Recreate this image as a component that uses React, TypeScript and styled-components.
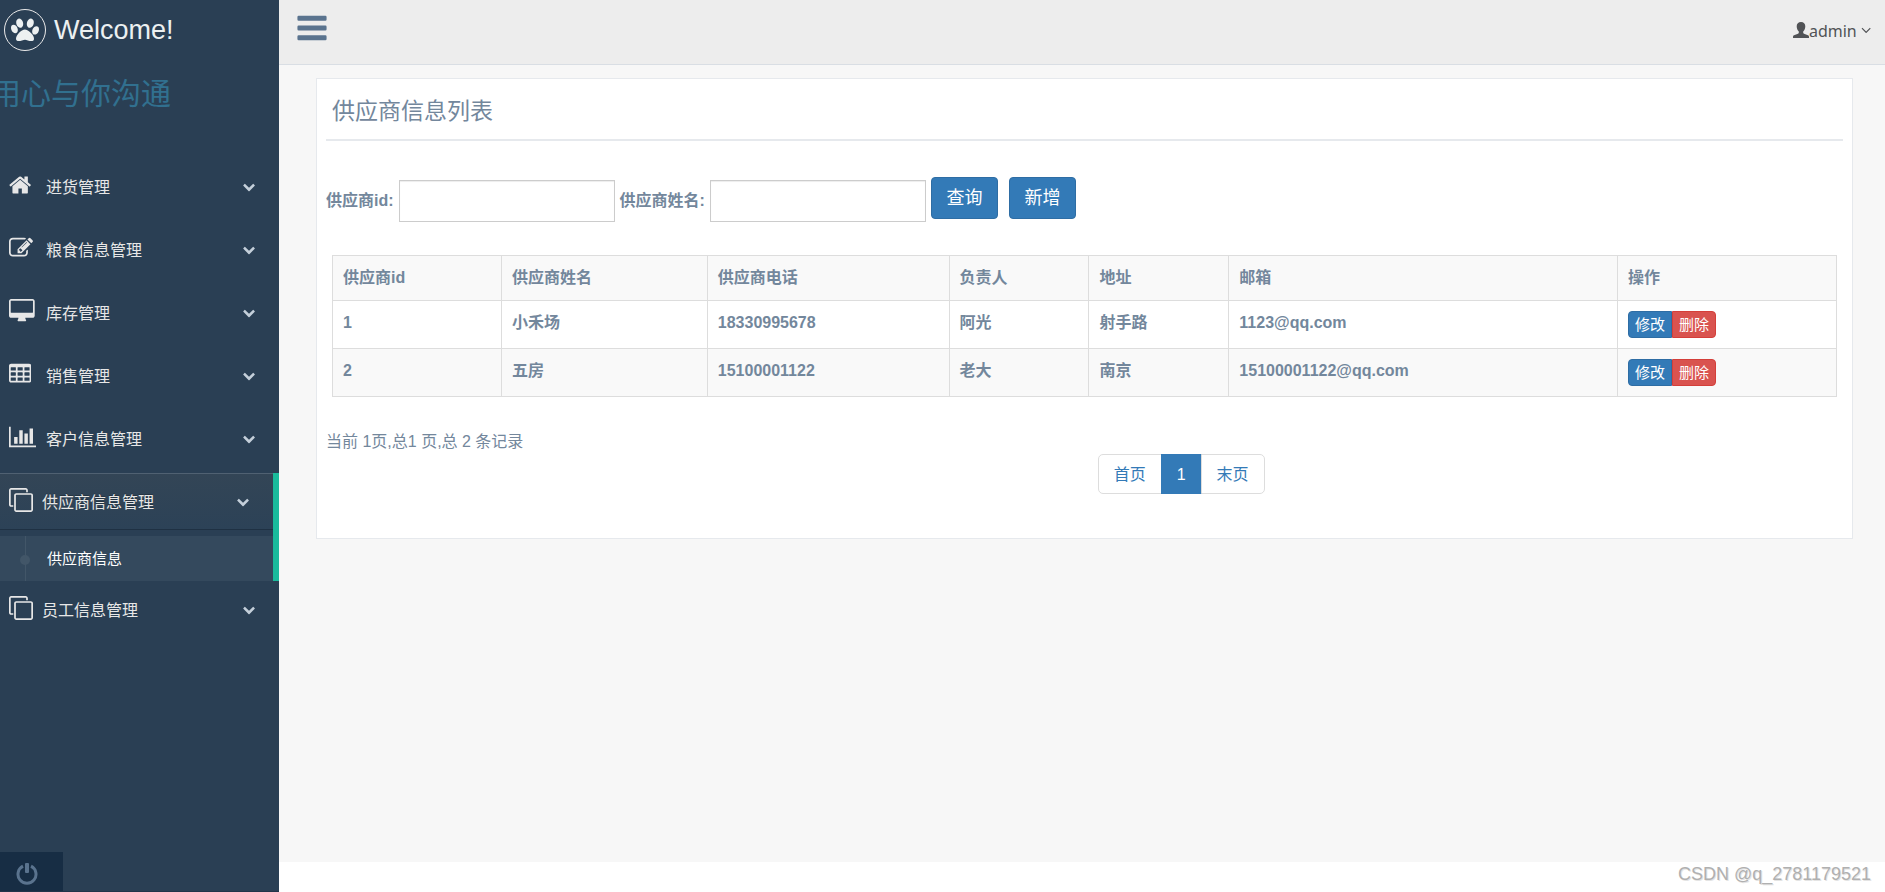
import React from "react";
import styled, { createGlobalStyle, css } from "styled-components";

const GlobalStyle = createGlobalStyle`
  *, *::before, *::after { box-sizing: border-box; }
  body {
    margin: 0;
    background: #2a3f54;
    color: #73879c;
    font: 16px/24px "Liberation Sans", "Noto Sans CJK SC", sans-serif;
  }
  a { color: inherit; text-decoration: none; }
  button, input { font: inherit; }
`;

/* ---------- Icons ---------- */

const Glyph = styled.svg`
  display: block;
  flex: none;
  fill: currentColor;
`;

type IconProps = { size: number; path: string; x?: number; width?: number };

const Icon = ({ size, path, x = 0, width = 1792 }: IconProps) => (
  <Glyph
    height={size}
    width={(size * width) / 1792}
    viewBox={`${x} 0 ${width} 1792`}
    aria-hidden="true"
  >
    <path fillRule="evenodd" d={path} />
  </Glyph>
);

const PAW =
  "M780 508q0 60-19 113.500t-63 92.500-105 39q-76 0-138-57.500t-92-135.500-30-151q0-60 19-113.500t63-92.500 105-39q77 0 138.500 57.500t91.500 135 30 151.500zm-342 390q0 80-42 139t-119 59q-76 0-141.500-55.500t-100.500-133.500-35-152q0-80 42-139.500t119-59.500q76 0 141.500 55.500t100.500 134 35 152.500zm458-27q118 0 255 97.500t229 237 92 254.500q0 46-17 76.500t-48.500 45-64.500 20-76 5.500q-68 0-187.500-45t-182.500-45q-66 0-192.500 44.500t-200.500 44.500q-183 0-183-146 0-86 56-191.500t139.500-192.500 187.500-146 193-59zm303-118q-61 0-105-39t-63-92.500-19-113.500q0-74 30-151.500t91.500-135 138.500-57.500q61 0 105 39t63 92.500 19 113.500q0 73-30 151t-92 135.500-138 57.500zm432-104q77 0 119 59.500t42 139.500q0 74-35 152t-100.500 133.500-141.500 55.500q-77 0-119-59t-42-139q0-74 35-152.500t100.500-134 141.500-55.500z";
const HOME =
  "M1472 992v480q0 26-19 45t-45 19h-384v-384h-256v384h-384q-26 0-45-19t-19-45v-480q0-1 .5-3t.5-3l575-474 575 474q1 2 1 6zm223-69l-62 74q-8 9-21 11h-3q-13 0-21-7l-692-577-692 577q-12 8-24 7-13-2-21-11l-62-74q-8-10-7-23.500t11-21.500l719-599q32-26 76-26t76 26l244 204v-195q0-14 9-23t23-9h192q14 0 23 9t9 23v408l219 182q10 8 11 21.500t-7 23.500z";
const EDIT =
  "M888 1184l116-116-152-152-116 116v56h96v96h56zm440-720q-16-16-33 1l-350 350q-17 17-1 33t33-1l350-350q17-17 1-33zm80 594v190q0 119-84.500 203.500t-203.500 84.500h-832q-119 0-203.500-84.500t-84.500-203.500v-832q0-119 84.500-203.500t203.500-84.500h832q63 0 117 25 15 7 18 23 3 17-9 29l-49 49q-14 14-32 8-23-6-45-6h-832q-66 0-113 47t-47 113v832q0 66 47 113t113 47h832q66 0 113-47t47-113v-126q0-13 9-22l64-64q15-15 35-7t20 29zm-96-738l288 288-672 672h-288v-288zm444 132l-92 92-288-288 92-92q28-28 68-28t68 28l152 152q28 28 28 68t-28 68z";
const DESKTOP =
  "M1728 992v-832q0-13-9.500-22.500t-22.500-9.500h-1600q-13 0-22.500 9.500t-9.500 22.500v832q0 13 9.500 22.500t22.500 9.500h1600q13 0 22.500-9.500t9.500-22.500zm128-832v1088q0 66-47 113t-113 47h-544q0 37 16 77.500t32 71 16 43.500q0 26-19 45t-45 19h-512q-26 0-45-19t-19-45q0-14 16-44t32-70 16-78h-544q-66 0-113-47t-47-113v-1088q0-66 47-113t113-47h1600q66 0 113 47t47 113z";
const cell = (x: number, y: number) =>
  `M${x + 32} ${y}h320q32 0 32 32v192q0 32-32 32h-320q-32 0-32-32v-192q0-32 32-32z`;
const TABLE =
  "M224 128h1344q66 0 113 47t47 113v1088q0 66-47 113t-113 47h-1344q-66 0-113-47t-47-113v-1088q0-66 47-113t113-47z" +
  [384, 768, 1152].map((y) => [192, 704, 1216].map((x) => cell(x, y)).join("")).join("");
const CHART =
  "M640 896v512h-256v-512h256zm384-512v1024h-256v-1024h256zm1024 1152v128h-2048v-1536h128v1408h1920zm-640-896v768h-256v-768h256zm384-384v1152h-256v-1152h256z";
const CLONE =
  "M1664 1632v-1088q0-13-9.500-22.500t-22.500-9.500h-1088q-13 0-22.500 9.500t-9.500 22.500v1088q0 13 9.500 22.500t22.500 9.500h1088q13 0 22.500-9.500t9.500-22.500zm128-1088v1088q0 66-47 113t-113 47h-1088q-66 0-113-47t-47-113v-1088q0-66 47-113t113-47h1088q66 0 113 47t47 113zm-384-384v160h-128v-160q0-13-9.500-22.500t-22.500-9.500h-1088q-13 0-22.500 9.500t-9.500 22.500v1088q0 13 9.500 22.500t22.500 9.500h160v128h-160q-66 0-113-47t-47-113v-1088q0-66 47-113t113-47h1088q66 0 113 47t47 113z";
const CHEVRON =
  "M1683 808l-742 741q-19 19-45 19t-45-19l-742-741q-19-19-19-45.500t19-45.500l166-165q19-19 45-19t45 19l531 531 531-531q19-19 45-19t45 19l166 165q19 19 19 45.500t-19 45.500z";
const ANGLE =
  "M1395 736q0 13-10 23l-466 466q-10 10-23 10t-23-10l-466-466q-10-10-10-23t10-23l50-50q10-10 23-10t23 10l393 393 393-393q10-10 23-10t23 10l50 50q10 10 10 23z";
const BARS = [256, 768, 1280]
  .map((y) => `M192 ${y}h1408q64 0 64 64v128q0 64-64 64h-1408q-64 0-64-64v-128q0-64 64-64z`)
  .join("");

const UserIcon = () => (
  <Glyph width="16" height="16" viewBox="0 0 16 16" aria-hidden="true">
    <path d="M8 0C5.300 0 3.700 1.700 3.700 4.200c0 2 .8 4.200 2.100 5.300v1.300c0 .5-.3.8-.8 1L1 13.300c-.7.300-1 .8-1 1.500V16h16v-1.200c0-.7-.3-1.200-1-1.500l-4-1.500c-.5-.2-.8-.5-.8-1V9.500c1.300-1.100 2.100-3.300 2.100-5.300C12.300 1.700 10.700 0 8 0z" />
  </Glyph>
);

const PowerIcon = () => (
  <Glyph width="22" height="22" viewBox="0 0 22 22" aria-hidden="true">
    <path
      d="M7 3.200A9 9 0 1 0 15 3.200"
      fill="none"
      stroke="currentColor"
      strokeWidth="3"
    />
    <rect x="9" y="0" width="4" height="10" rx="1" />
  </Glyph>
);

/* ---------- Page frame ---------- */

const Page = styled.div`
  display: flex;
  min-height: 100vh;
`;

const Sidebar = styled.aside`
  display: flex;
  flex-direction: column;
  flex: 0 0 279px;
  overflow: hidden;
  background: #2a3f54;
  border-bottom: 1px solid #21354a;
`;

const Main = styled.div`
  display: flex;
  flex-direction: column;
  flex: 1;
  min-width: 0;
`;

/* ---------- Sidebar ---------- */

const Brand = styled.a`
  display: flex;
  align-items: center;
  gap: 8px;
  height: 60px;
  padding-left: 4px;
  color: #ecf0f1;
  font-size: 27px;
`;

const BrandBadge = styled.span`
  display: grid;
  place-items: center;
  width: 42px;
  height: 42px;
  border: 1px solid #eaeaea;
  border-radius: 50%;
`;

const Slogan = styled.p`
  margin: 13px 0 43px -9px;
  color: #31708f;
  font-size: 30px;
  line-height: 42px;
  white-space: nowrap;
`;

const Menu = styled.ul`
  margin: 0;
  padding: 0;
  list-style: none;
`;

const MenuItem = styled.li<{ $open?: boolean }>`
  ${(p) => p.$open && css`border-right: 6px solid #1abb9c;`}
`;

const MenuLink = styled.a<{ $open?: boolean }>`
  display: flex;
  align-items: center;
  height: 57px;
  margin-bottom: 6px;
  padding: 0 24px 0 9px;
  color: #e7e7e7;
  ${(p) =>
    p.$open &&
    css`
      border-top: 1px solid #506172;
      border-bottom: 1px solid #1f3143;
      background: linear-gradient(#334556, #2c4257);
      text-shadow: rgba(0, 0, 0, 0.25) 0 -1px 0;
    `}
`;

const MenuIcon = styled.span<{ $narrow?: boolean }>`
  flex: 0 0 ${(p) => (p.$narrow ? 33 : 37)}px;
  padding-bottom: 3px;
`;

const MenuText = styled.span`
  flex: 1;
  padding-top: 2px;
`;

const MenuArrow = styled.span`
  color: #c4cfda;
`;

const SubLink = styled.a`
  display: block;
  position: relative;
  padding-left: 47px;
  background: #34495d;
  color: #fff;
  font-size: 15px;
  line-height: 45px;
  &::before {
    content: "";
    position: absolute;
    left: 25px;
    top: 0;
    bottom: 0;
    border-left: 1px solid #425668;
  }
  &::after {
    content: "";
    position: absolute;
    left: 20px;
    top: 19px;
    width: 10px;
    height: 10px;
    border-radius: 50%;
    background: #425668;
  }
`;

const PowerButton = styled.button`
  width: 63px;
  height: 39px;
  margin-top: auto;
  padding: 4px 0 0 16px;
  border: 0;
  background: #172d44;
  color: #5a738e;
`;

/* ---------- Top bar and footer ---------- */

const TopBar = styled.header`
  display: flex;
  justify-content: space-between;
  height: 65px;
  padding: 0 14px 0 16px;
  background: #ededed;
  border-bottom: 1px solid #d9dee4;
`;

const ToggleButton = styled.button`
  align-self: flex-start;
  margin-top: 11px;
  padding: 0;
  border: 0;
  background: none;
  color: #5a738e;
`;

const UserMenu = styled.a`
  display: flex;
  align-items: center;
  height: 60px;
  color: #515356;
  font-family: "Noto Sans", "Noto Sans CJK SC", sans-serif;
`;

const UserName = styled.span`
  padding: 2px 4px 0 0;
  font-size: 16px;
`;

const Content = styled.main`
  flex: 1;
  padding: 13px 32px 13px 37px;
  background: #f7f7f7;
`;

const Footer = styled.footer`
  height: 30px;
  padding-right: 14px;
  background: #fff;
  color: #b0b0b0;
  font-size: 18px;
  text-align: right;
  text-shadow: 1px 1px 0 #e4e4e4;
`;

/* ---------- Supplier panel ---------- */

const Panel = styled.section`
  padding: 0 9px 44px;
  border: 1px solid #e6e9ed;
  background: #fff;
`;

const PanelTitle = styled.h2`
  margin: 0;
  padding: 14px 6px 10px;
  border-bottom: 2px solid #e6e9ed;
  font-size: 23px;
  font-weight: 400;
  line-height: 36px;
`;

const SearchForm = styled.form`
  display: flex;
  align-items: flex-start;
  gap: 5px;
  margin: 36px 0 33px;
`;

const Field = styled.label`
  display: flex;
  align-items: center;
  gap: 5px;
  margin-top: 3px;
  font-weight: 700;
`;

const TextInput = styled.input`
  width: 216px;
  height: 42px;
  padding: 6px 12px;
  border: 1px solid #ccc;
  border-radius: 0;
  background: #fff;
  box-shadow: inset 0 1px 1px rgba(0, 0, 0, 0.075);
  color: #555;
`;

const ActionButton = styled.button`
  width: 67px;
  height: 42px;
  padding: 0;
  border: 1px solid #2e6da4;
  border-radius: 4px;
  background: #337ab7;
  color: #fff;
  font-size: 18px;
  & + & {
    margin-left: 6px;
  }
`;

const TableWrap = styled.div`
  padding: 0 6px;
`;

const DataTable = styled.table`
  width: 100%;
  table-layout: fixed;
  border-collapse: collapse;
  font-weight: 700;
  text-align: left;
  tr:nth-child(odd) {
    background: #f9f9f9;
  }
  tbody tr:nth-child(odd) {
    background: #fff;
  }
  tbody tr:nth-child(even) {
    background: #f9f9f9;
  }
  th,
  td {
    padding: 10px;
    border: 1px solid #ddd;
    vertical-align: top;
  }
`;

const Column = styled.col<{ $share: number }>`
  width: ${(p) => p.$share}%;
`;

const RowActions = styled.div`
  display: flex;
`;

const RowButton = styled.button<{ $danger?: boolean }>`
  height: 27px;
  width: 44px;
  padding: 0;
  border: 1px solid ${(p) => (p.$danger ? "#d43f3a" : "#2e6da4")};
  border-radius: ${(p) => (p.$danger ? "0 4px 4px 0" : "4px 0 0 4px")};
  background: ${(p) => (p.$danger ? "#d9534f" : "#337ab7")};
  color: #fff;
  font-size: 15px;
  font-weight: 400;
  line-height: 24px;
`;

const Summary = styled.p`
  margin: 33px 0 0;
`;

const Pagination = styled.nav`
  display: flex;
  padding-left: 51%;
`;

const PageLink = styled.a<{ $current?: boolean }>`
  height: 40px;
  margin-left: -1px;
  padding: 0 15px;
  border: 1px solid ${(p) => (p.$current ? "#337ab7" : "#ddd")};
  background: ${(p) => (p.$current ? "#337ab7" : "#fff")};
  color: ${(p) => (p.$current ? "#fff" : "#337ab7")};
  line-height: 40px;
  &:first-child {
    margin-left: -2px;
    border-radius: 5px 0 0 5px;
  }
  &:last-child {
    border-radius: 0 5px 5px 0;
  }
`;

/* ---------- Data ---------- */

type Entry = {
  label: string;
  icon: React.ReactNode;
  narrow?: boolean;
  children?: string[];
};

const entries: Entry[] = [
  { label: "进货管理", icon: <Icon size={24} path={HOME} x={64} width={1664} /> },
  { label: "粮食信息管理", icon: <Icon size={24} path={EDIT} /> },
  { label: "库存管理", icon: <Icon size={24} path={DESKTOP} x={-64} width={1920} /> },
  { label: "销售管理", icon: <Icon size={24} path={TABLE} x={64} width={1664} /> },
  { label: "客户信息管理", icon: <Icon size={24} path={CHART} width={2048} /> },
  {
    label: "供应商信息管理",
    icon: <Icon size={24} path={CLONE} />,
    narrow: true,
    children: ["供应商信息"],
  },
  { label: "员工信息管理", icon: <Icon size={24} path={CLONE} />, narrow: true },
];

const columns = [
  { title: "供应商id", share: 11.23 },
  { title: "供应商姓名", share: 13.69 },
  { title: "供应商电话", share: 16.08 },
  { title: "负责人", share: 9.3 },
  { title: "地址", share: 9.3 },
  { title: "邮箱", share: 25.84 },
  { title: "操作", share: 14.56 },
];

const suppliers = [
  ["1", "小禾场", "18330995678", "阿光", "射手路", "1123@qq.com"],
  ["2", "五房", "15100001122", "老大", "南京", "15100001122@qq.com"],
];

export default function App() {
  return (
    <>
      <GlobalStyle />
      <Page>
        <Sidebar>
          <Brand href="#">
            <BrandBadge>
              <Icon size={28} path={PAW} />
            </BrandBadge>
            Welcome!
          </Brand>
          <Slogan>用心与你沟通</Slogan>
          <nav>
            <Menu>
              {entries.map(({ label, icon, narrow, children }) => (
                <MenuItem key={label} $open={!!children}>
                  <MenuLink href="#" $open={!!children}>
                    <MenuIcon $narrow={narrow}>{icon}</MenuIcon>
                    <MenuText>{label}</MenuText>
                    <MenuArrow>
                      <Icon size={13} path={CHEVRON} x={64} width={1664} />
                    </MenuArrow>
                  </MenuLink>
                  {children?.map((child) => (
                    <SubLink key={child} href="#">
                      {child}
                    </SubLink>
                  ))}
                </MenuItem>
              ))}
            </Menu>
          </nav>
          <PowerButton type="button" aria-label="退出">
            <PowerIcon />
          </PowerButton>
        </Sidebar>

        <Main>
          <TopBar>
            <ToggleButton type="button" aria-label="菜单">
              <Icon size={34} path={BARS} />
            </ToggleButton>
            <UserMenu href="#">
              <UserIcon />
              <UserName>admin</UserName>
              <Icon size={16} path={ANGLE} x={320} width={1152} />
            </UserMenu>
          </TopBar>

          <Content>
            <Panel>
              <PanelTitle>供应商信息列表</PanelTitle>
              <SearchForm onSubmit={(e) => e.preventDefault()}>
                <Field>
                  供应商id:
                  <TextInput type="text" name="id" />
                </Field>
                <Field>
                  供应商姓名:
                  <TextInput type="text" name="name" />
                </Field>
                <ActionButton type="submit">查询</ActionButton>
                <ActionButton type="button">新增</ActionButton>
              </SearchForm>

              <TableWrap>
                <DataTable>
                  <colgroup>
                    {columns.map((c) => (
                      <Column key={c.title} $share={c.share} />
                    ))}
                  </colgroup>
                  <thead>
                    <tr>
                      {columns.map((c) => (
                        <th key={c.title} scope="col">
                          {c.title}
                        </th>
                      ))}
                    </tr>
                  </thead>
                  <tbody>
                    {suppliers.map((row) => (
                      <tr key={row[0]}>
                        {row.map((value) => (
                          <td key={value}>{value}</td>
                        ))}
                        <td>
                          <RowActions>
                            <RowButton type="button">修改</RowButton>
                            <RowButton type="button" $danger>
                              删除
                            </RowButton>
                          </RowActions>
                        </td>
                      </tr>
                    ))}
                  </tbody>
                </DataTable>
              </TableWrap>

              <Summary>当前 1页,总1 页,总 2 条记录</Summary>
              <Pagination aria-label="分页">
                <PageLink href="#">首页</PageLink>
                <PageLink href="#" $current aria-current="page">
                  1
                </PageLink>
                <PageLink href="#">末页</PageLink>
              </Pagination>
            </Panel>
          </Content>

          <Footer>CSDN @q_2781179521</Footer>
        </Main>
      </Page>
    </>
  );
}
